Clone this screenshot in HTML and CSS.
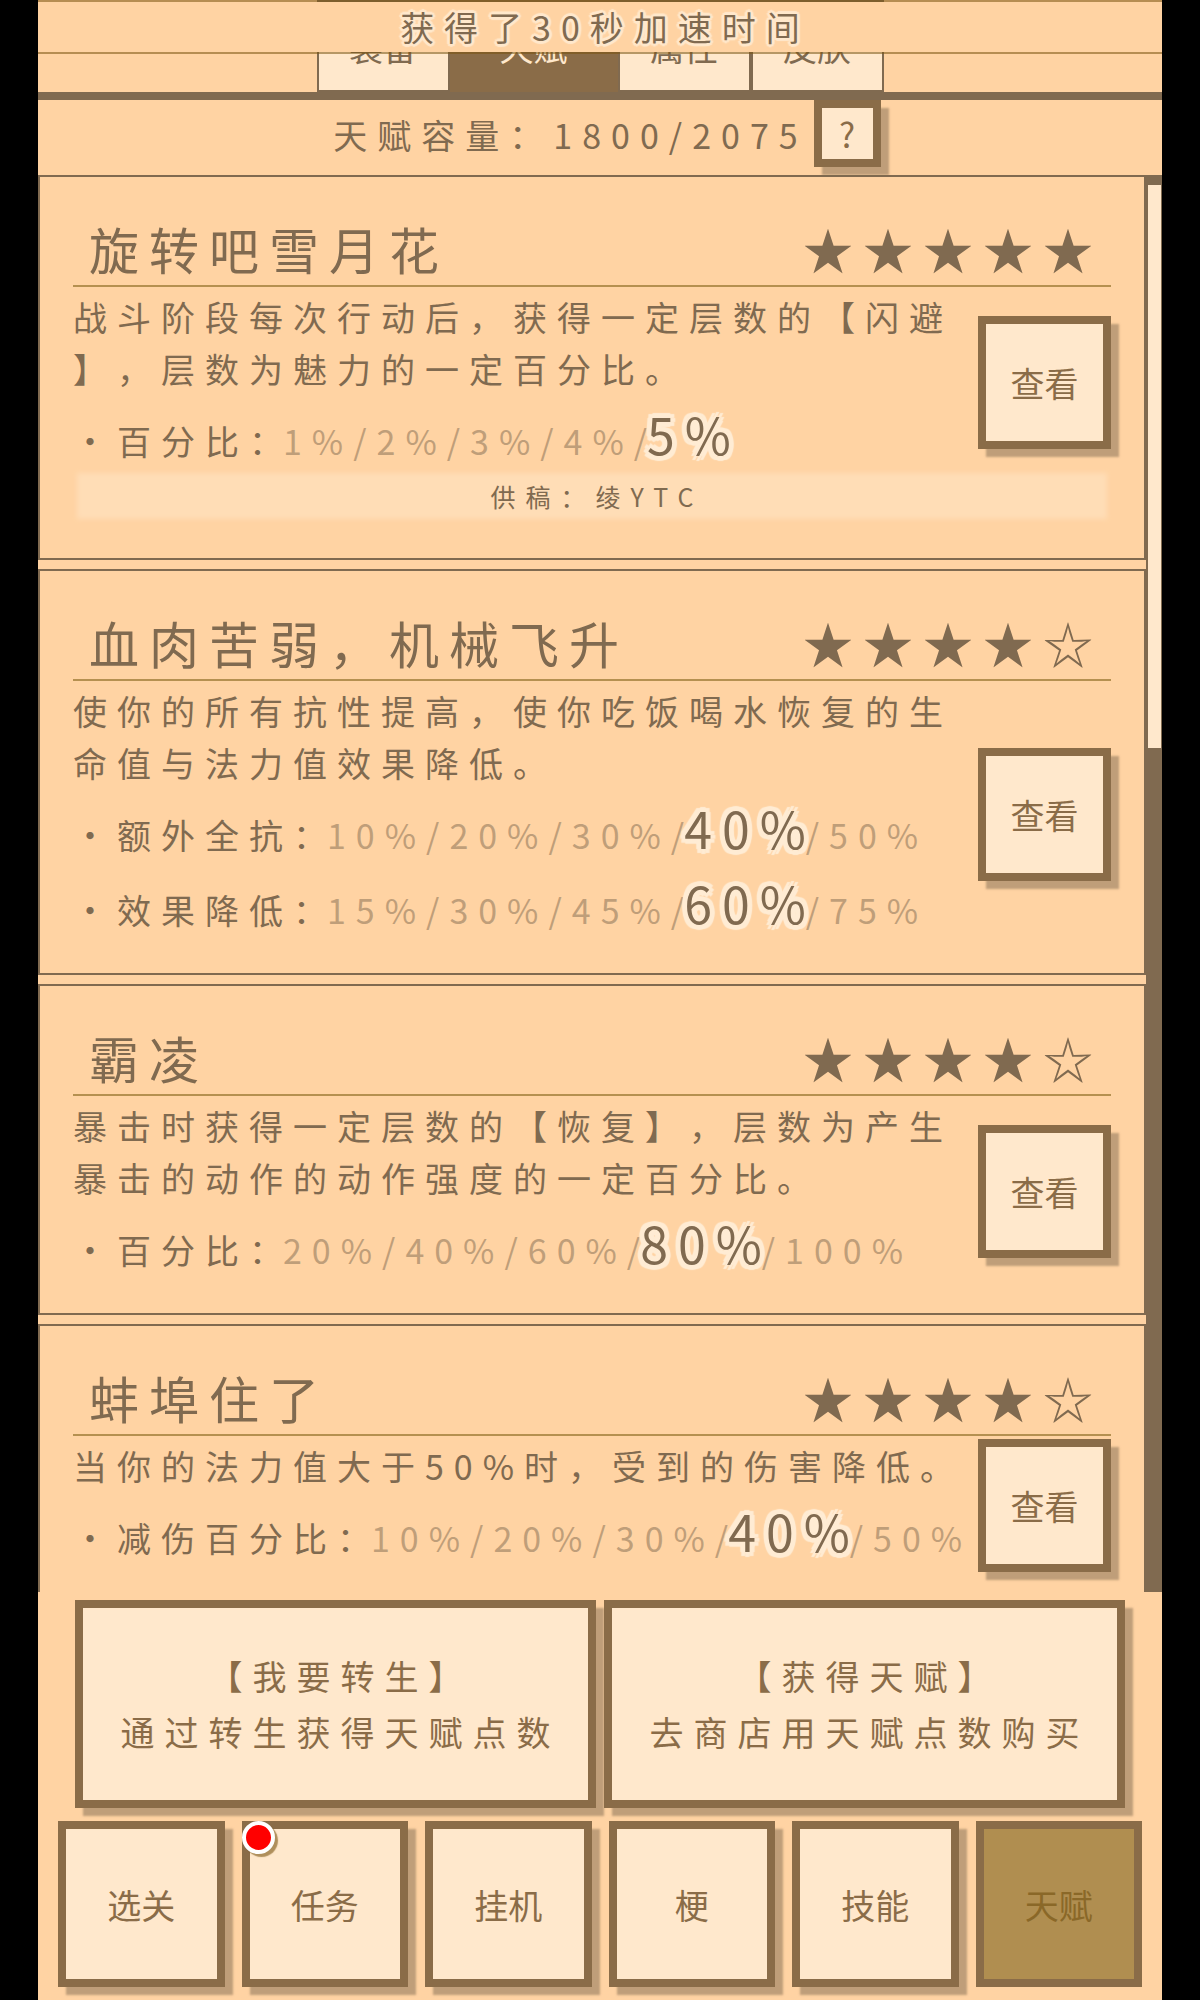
FILE: index.html
```html
<!DOCTYPE html>
<html lang="zh-CN">
<head>
  <meta charset="UTF-8">
  <meta name="viewport" content="width=device-width, initial-scale=1">
  <title>天赋</title>
  <link rel="stylesheet" href="styles.css">
</head>
<body>
  <div class="app">
    <div class="toast" role="status">获得了30秒加速时间</div>

    <nav class="tabs">
      <button class="tab">装备</button>
      <button class="tab active">天赋</button>
      <button class="tab">属性</button>
      <button class="tab">皮肤</button>
    </nav>

    <header class="capacity">
      <span>天赋容量：1800/2075</span>
      <button class="btn help">?</button>
    </header>

    <main class="talents">
      <div class="list">
        <article class="card">
          <div class="card-head">
            <h2>旋转吧雪月花</h2>
            <span class="stars">★★★★★</span>
          </div>
          <div class="card-body">
            <div class="text">
              <p>战斗阶段每次行动后，获得一定层数的【闪避】，层数为魅力的一定百分比。</p>
              <div class="stat"><span class="label">・百分比：</span><span class="values">1%/2%/3%/4%/<b>5%</b></span></div>
            </div>
            <button class="btn view">查看</button>
          </div>
          <div class="credit">供稿：绫YTC</div>
        </article>

        <article class="card">
          <div class="card-head">
            <h2>血肉苦弱，机械飞升</h2>
            <span class="stars">★★★★☆</span>
          </div>
          <div class="card-body">
            <div class="text">
              <p>使你的所有抗性提高，使你吃饭喝水恢复的生命值与法力值效果降低。</p>
              <div class="stat"><span class="label">・额外全抗：</span><span class="values">10%/20%/30%/<b>40%</b>/50%</span></div>
              <div class="stat"><span class="label">・效果降低：</span><span class="values">15%/30%/45%/<b>60%</b>/75%</span></div>
            </div>
            <button class="btn view">查看</button>
          </div>
        </article>

        <article class="card">
          <div class="card-head">
            <h2>霸凌</h2>
            <span class="stars">★★★★☆</span>
          </div>
          <div class="card-body">
            <div class="text">
              <p>暴击时获得一定层数的【恢复】，层数为产生暴击的动作的动作强度的一定百分比。</p>
              <div class="stat"><span class="label">・百分比：</span><span class="values">20%/40%/60%/<b>80%</b>/100%</span></div>
            </div>
            <button class="btn view">查看</button>
          </div>
        </article>

        <article class="card">
          <div class="card-head">
            <h2>蚌埠住了</h2>
            <span class="stars">★★★★☆</span>
          </div>
          <div class="card-body">
            <div class="text">
              <p>当你的法力值大于50%时，受到的伤害降低。</p>
              <div class="stat"><span class="label">・减伤百分比：</span><span class="values">10%/20%/30%/<b>40%</b>/50%</span></div>
            </div>
            <button class="btn view">查看</button>
          </div>
        </article>
      </div>
      <div class="scrollbar"><div class="thumb"></div></div>
    </main>

    <div class="actions">
      <button class="btn action"><span>【我要转生】</span><span>通过转生获得天赋点数</span></button>
      <button class="btn action"><span>【获得天赋】</span><span>去商店用天赋点数购买</span></button>
    </div>

    <nav class="bottom-nav">
      <button class="btn">选关</button>
      <button class="btn"><i class="dot"></i>任务</button>
      <button class="btn">挂机</button>
      <button class="btn">梗</button>
      <button class="btn">技能</button>
      <button class="btn" disabled>天赋</button>
    </nav>
  </div>
</body>
</html>
```

FILE: styles.css
```css
* {
  box-sizing: border-box;
}

body {
  margin: 0;
  background: #000;
  color: #806a50;
  font-family: "Noto Sans CJK SC", sans-serif;
  font-size: 34px;
  letter-spacing: 10px;
  text-spacing-trim: space-all;
}

button {
  font: inherit;
  letter-spacing: 0;
  padding: 0;
  cursor: pointer;
}

.app {
  position: relative;
  display: flex;
  flex-direction: column;
  height: 100vh;
  margin: 0 38px;
  padding-bottom: 13px;
  background: #ffd3a3;
  overflow: hidden;
}

/* notice over the top tabs */
.toast {
  position: absolute;
  z-index: 2;
  top: 0;
  left: 0;
  right: 0;
  height: 54px;
  line-height: 50px;
  padding-left: 10px;
  text-align: center;
  background: #ffd3a3 padding-box;
  border: solid rgba(122, 84, 16, 0.55);
  border-width: 2px 0;
  text-shadow:
    3px 0 1px #ffe8cc, -3px 0 1px #ffe8cc, 0 3px 1px #ffe8cc, 0 -3px 1px #ffe8cc,
    2px 2px 1px #ffe8cc, -2px 2px 1px #ffe8cc, 2px -2px 1px #ffe8cc, -2px -2px 1px #ffe8cc;
}

.tabs {
  display: flex;
  flex: none;
  justify-content: center;
  height: 100px;
  border-bottom: 8px solid #806a50;
}

.tab {
  width: 133px;
  color: #806a50;
  background: #ffe8cc;
  border: 2px solid #806a50;
}

.tab.active {
  width: 168px;
  color: #ffe8cc;
  background: #8a6c48;
  border-color: #8a6c48;
}

.btn {
  position: relative;
  color: #8a6c48;
  background: #ffe8cc;
  border: 8px solid #8a6c48;
  box-shadow: 8px 8px 2px rgba(128, 106, 80, 0.5);
}

.btn:disabled {
  color: #8a6828;
  background: #b08e50;
  box-shadow: none;
}

.capacity {
  display: flex;
  flex: none;
  justify-content: center;
  gap: 6px;
  height: 75px;
  padding-left: 14px;
  line-height: 70px;
}

.help {
  width: 67px;
  height: 67px;
  line-height: 50px;
}

.talents {
  display: flex;
  flex: 1;
  min-height: 0;
  overflow: hidden;
}

.list {
  flex: 1;
}

.card {
  margin-bottom: 9px;
  padding: 0 33px 26px;
  border: 2px solid #806a50;
}

.card-head {
  display: flex;
  justify-content: space-between;
  align-items: flex-end;
  height: 110px;
  padding: 0 8px 0 16px;
  border-bottom: 2px solid #b59050;
}

h2,
.stars {
  margin: 0;
  font-size: 50px;
  font-weight: 400;
  line-height: 74px;
}

.card-body {
  display: flex;
  align-items: center;
  justify-content: space-between;
}

.text {
  max-width: 905px;
  white-space: nowrap;
}

p {
  margin: 4px 0 8px;
  line-height: 52px;
  white-space: normal;
  word-break: break-all;
  line-break: anywhere;
}

.stat {
  height: 75px;
  line-height: 75px;
}

.label {
  margin-right: -10px;
}

.values {
  color: rgba(128, 106, 80, 0.5);
}

.values b {
  margin: 0 -10px;
  font-size: 50px;
  font-weight: 400;
  line-height: 1;
  color: #806a50;
  text-shadow:
    5px 0 1px #ffecd4, -5px 0 1px #ffecd4, 0 5px 1px #ffecd4, 0 -5px 1px #ffecd4,
    4px 4px 1px #ffecd4, -4px 4px 1px #ffecd4, 4px -4px 1px #ffecd4, -4px -4px 1px #ffecd4,
    0 0 4px #ffecd4, 0 0 4px #ffecd4;
}

.view {
  flex: none;
  width: 133px;
  height: 133px;
}

.credit {
  margin: 0 9px 18px;
  font-size: 25px;
  line-height: 36px;
  padding-left: 10px;
  text-align: center;
  background: #ffddb6;
  box-shadow: 0 0 5px 5px #ffddb6;
}

.scrollbar {
  flex: none;
  width: 16px;
  padding: 10px 1px 0 2px;
  background: #806a50;
}

.thumb {
  height: 40%;
  background: #ffe8cc;
}

.actions {
  display: grid;
  flex: none;
  grid-template-columns: 1fr 1fr;
  gap: 8px;
  padding: 8px 37px 13px;
}

.action {
  height: 208px;
  letter-spacing: 10px;
  line-height: 56px;
}

.action span {
  display: block;
  padding-left: 10px;
}

.bottom-nav {
  display: grid;
  flex: none;
  grid-template-columns: repeat(6, 1fr);
  gap: 17px;
  padding: 0 20px;
}

.bottom-nav .btn {
  height: 166px;
}

.dot {
  position: absolute;
  top: -8px;
  left: -8px;
  width: 33px;
  height: 33px;
  background: #f00;
  border: 4px solid #fff;
  border-radius: 50%;
  box-shadow: 3px 3px 1px rgba(122, 84, 16, 0.6);
}
```
